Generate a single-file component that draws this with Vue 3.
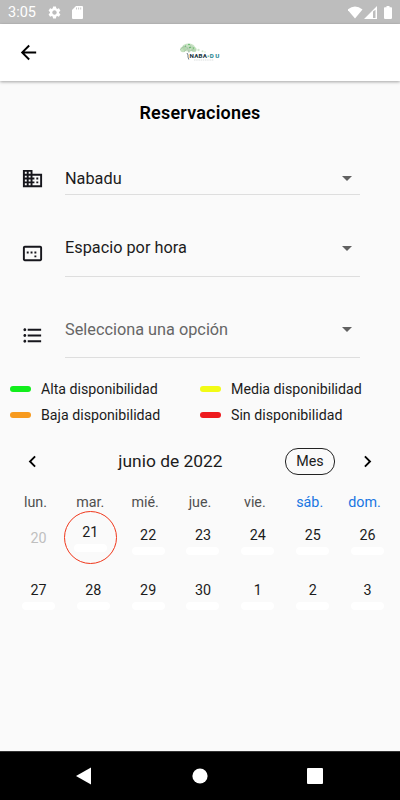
<template>
  <div class="screen">
    <div class="status-bar">
      <span class="clock">3:05</span>
      <svg class="gear" viewBox="0 0 24 24">
        <path fill="#fff" d="M19.14 12.94c.04-.3.06-.61.06-.94 0-.32-.02-.64-.07-.94l2.03-1.58c.18-.14.23-.41.12-.61l-1.92-3.32c-.12-.22-.37-.29-.59-.22l-2.39.96c-.5-.38-1.03-.7-1.62-.94l-.36-2.54c-.04-.24-.24-.41-.48-.41h-3.84c-.24 0-.43.17-.47.41l-.36 2.54c-.59.24-1.13.57-1.62.94l-2.39-.96c-.22-.08-.47 0-.59.22L2.74 8.87c-.12.21-.08.47.12.61l2.03 1.58c-.05.3-.09.63-.09.94s.02.64.07.94l-2.03 1.58c-.18.14-.23.41-.12.61l1.92 3.32c.12.22.37.29.59.22l2.39-.96c.5.38 1.03.7 1.62.94l.36 2.54c.05.24.24.41.48.41h3.84c.24 0 .44-.17.47-.41l.36-2.54c.59-.24 1.13-.56 1.62-.94l2.39.96c.22.08.47 0 .59-.22l1.92-3.32c.12-.22.07-.47-.12-.61l-2.01-1.58zM12 15.6c-1.98 0-3.6-1.62-3.6-3.6s1.62-3.6 3.6-3.6 3.6 1.62 3.6 3.6-1.62 3.6-3.6 3.6z" />
      </svg>
      <svg class="sd" viewBox="0 0 11 13">
        <path fill="#fff" d="M4 0h6q1 0 1 1v11q0 1-1 1H1q-1 0-1-1V4z" />
        <path stroke="#bdbdbd" stroke-width="0.8" d="M4.5 1.5v2M6.6 1.5v2M8.7 1.5v2" />
      </svg>
      <svg class="signals" viewBox="0 0 46 14">
        <path fill="#fff" d="M-0.500 3.600Q7-2.600 14.500 3.600L7 12.500z" />
        <path fill="#fff" fill-rule="evenodd" d="M29 0v13H16zM25 5.500V12h2.500V3.800z" />
        <path fill="#fff" d="M38.500 0h3v1.300h1.700q.8 0 .8.800v10q0 .8-.8.800h-6.400q-.8 0-.8-.8v-10q0-.8.8-.8h1.700z" />
      </svg>
    </div>

    <header class="app-bar">
      <svg class="back" viewBox="0 0 24 24">
        <path d="M20 11H7.830l5.590-5.590L12 4l-8 8 8 8 1.410-1.410L7.830 13H20v-2z" />
      </svg>
      <svg class="logo" viewBox="0 0 42 20">
        <g fill="#a9d3a3">
          <ellipse cx="9.500" cy="5.500" rx="6.500" ry="4" opacity="0.65" />
          <circle cx="4" cy="7.500" r="2.800" opacity="0.7" />
          <circle cx="15" cy="7.500" r="2.600" opacity="0.7" />
          <circle cx="19.500" cy="8" r="1.200" opacity="0.55" />
          <circle cx="23.500" cy="9.300" r="1" opacity="0.55" />
          <circle cx="26" cy="10" r="0.700" opacity="0.55" />
        </g>
        <g fill="none" stroke="#8fae93" stroke-width="0.4">
          <path d="M1 8q5-6 8-2M5 10q3-5 9-5M4 4q5 1 6 6M12 3q-3 4-2 8M9 10q4-3 8-2" />
        </g>
        <g fill="#3fae49">
          <circle cx="10" cy="2.500" r="0.700" />
          <circle cx="11" cy="5.500" r="0.700" />
          <circle cx="6.500" cy="4" r="0.500" />
          <circle cx="14.500" cy="6" r="0.500" />
        </g>
        <path d="M8 11q1.500 2 1 4l.8 2.500" fill="none" stroke="#31444c" stroke-width="0.7" />
        <text x="10.500" y="16.200" textLength="17.500" class="logo-name">NABA</text>
        <text x="28" y="16.500" class="logo-star">*</text>
        <text x="30.800" y="16.200" textLength="9.500" class="logo-name logo-end">DU</text>
        <path d="M15 18h20" stroke="#c4caca" stroke-width="0.6" stroke-dasharray="1.500 0.700" />
      </svg>
    </header>

    <main class="content">
      <h1>Reservaciones</h1>

      <div v-for="field in fields" :key="field.icon" class="field" :class="field.icon">
        <svg class="field-icon" viewBox="0 0 24 24">
          <path :d="icons[field.icon]" />
        </svg>
        <div class="select" :class="{ placeholder: field.empty }">
          <span>{{ field.label }}</span>
          <svg class="caret" viewBox="0 0 10 5"><path d="M0 0h10L5 5z" /></svg>
        </div>
      </div>

      <div class="legend">
        <div v-for="item in legend" :key="item.name" class="legend-item">
          <span class="swatch" :class="item.name"></span>
          <span>{{ item.label }}</span>
        </div>
      </div>

      <div class="calendar-header">
        <svg class="chevron" viewBox="0 0 24 24">
          <path d="M15.410 7.410L14 6l-6 6 6 6 1.410-1.410L10.830 12z" />
        </svg>
        <span class="month">junio de 2022</span>
        <button class="format">Mes</button>
        <svg class="chevron" viewBox="0 0 24 24">
          <path d="M10 6L8.590 7.410 13.170 12l-4.580 4.590L10 18l6-6z" />
        </svg>
      </div>

      <div class="weekdays">
        <span v-for="(name, i) in weekdays" :key="name" :class="{ weekend: i > 4 }">{{ name }}</span>
      </div>
      <div class="days">
        <div v-for="day in days" :key="day" class="day" :class="{ past: day === 20, today: day === 21 }">
          <span class="number">{{ day }}</span>
          <span v-if="day !== 20" class="marker"></span>
        </div>
      </div>
    </main>

    <nav class="nav-bar">
      <svg viewBox="0 0 18 18"><path d="M1 9L16 .5v17z" /></svg>
      <svg viewBox="0 0 18 18"><circle cx="9" cy="9" r="7.600" /></svg>
      <svg viewBox="0 0 18 18"><rect x="1" y="1" width="16" height="16" rx="1" /></svg>
    </nav>
  </div>
</template>

<script setup>
const icons = {
  building: 'M12 7V3H2v18h20V7H12zM6 19H4v-2h2v2zm0-4H4v-2h2v2zm0-4H4V9h2v2zm0-4H4V5h2v2zm4 12H8v-2h2v2zm0-4H8v-2h2v2zm0-4H8V9h2v2zm0-4H8V5h2v2zm10 12h-8v-2h2v-2h-2v-2h2v-2h-2V9h8v10zm-2-8h-2v2h2v-2zm0 4h-2v2h2v-2z',
  space: 'M20 4H4c-1.110 0-2 .9-2 2v12c0 1.100.89 2 2 2h16c1.100 0 2-.9 2-2V6c0-1.100-.9-2-2-2zm0 14H4V6h16v12zM6 10h2v2H6zm4 0h2v2h-2zm4 0h2v2h-2zm0 4h2v2h-2z',
  list: 'M4 10.500c-.83 0-1.500.67-1.500 1.500s.67 1.500 1.500 1.500 1.500-.67 1.500-1.500-.67-1.500-1.500-1.500zm0-6c-.83 0-1.500.67-1.500 1.500S3.170 7.500 4 7.500 5.500 6.830 5.500 6 4.830 4.500 4 4.500zm0 12c-.83 0-1.500.68-1.500 1.500s.68 1.500 1.500 1.500 1.500-.68 1.500-1.500-.67-1.500-1.500-1.500zM7 19h14v-2H7v2zm0-6h14v-2H7v2zm0-8v2h14V5H7z',
};

const fields = [
  { icon: 'building', label: 'Nabadu' },
  { icon: 'space', label: 'Espacio por hora' },
  { icon: 'list', label: 'Selecciona una opción', empty: true },
];

const legend = [
  { name: 'high', label: 'Alta disponibilidad' },
  { name: 'medium', label: 'Media disponibilidad' },
  { name: 'low', label: 'Baja disponibilidad' },
  { name: 'none', label: 'Sin disponibilidad' },
];

const weekdays = ['lun.', 'mar.', 'mié.', 'jue.', 'vie.', 'sáb.', 'dom.'];
const days = [20, 21, 22, 23, 24, 25, 26, 27, 28, 29, 30, 1, 2, 3];
</script>

<style>
body {
  margin: 0;
}
</style>

<style scoped>
.screen {
  width: 400px;
  height: 800px;
  display: flex;
  flex-direction: column;
  overflow: hidden;
  background: #fafafa;
  color: #1c1c1c;
  font-family: Roboto, sans-serif;
}

svg {
  display: block;
  flex: none;
}

.status-bar {
  height: 24px;
  flex: none;
  display: flex;
  align-items: center;
  box-sizing: border-box;
  padding: 1px 8px 0;
  background: #bdbdbd;
  color: #fff;
}

.clock {
  width: 39px;
  font-size: 14.500px;
  line-height: 24px;
}

.gear {
  width: 15px;
  height: 15px;
}

.sd {
  width: 11px;
  height: 13px;
  margin-left: 10px;
}

.signals {
  width: 46px;
  height: 14px;
  margin-left: auto;
  margin-right: -2px;
}

.app-bar {
  height: 57px;
  flex: none;
  display: flex;
  align-items: center;
  box-sizing: border-box;
  padding-left: 17px;
  background: #fff;
  box-shadow: 0 1px 3px rgba(0, 0, 0, 0.35);
  z-index: 1;
}

.back {
  width: 23px;
  height: 23px;
}

.logo {
  width: 42px;
  height: 20px;
  margin-left: 139px;
  margin-top: -2px;
}

.logo-name {
  font-size: 6.200px;
  font-weight: 800;
  fill: #243a46;
}

.logo-star {
  font-size: 6px;
  fill: #4caf9a;
}

.logo-end {
  fill: #2b8a94;
}

.content {
  flex: 1;
}

h1 {
  margin: 20px 0 0;
  font-size: 18px;
  font-weight: 600;
  line-height: 24px;
  letter-spacing: 0.2px;
  text-align: center;
  color: #000;
}

.field {
  display: flex;
  padding-left: 21px;
}

.field-icon {
  width: 23px;
  height: 23px;
  fill: #16161c;
}

.select {
  width: 295px;
  margin-left: 21px;
  display: flex;
  align-items: flex-start;
  justify-content: space-between;
  box-sizing: border-box;
  border-bottom: 1px solid #dedede;
  font-size: 16.300px;
  line-height: 25px;
}

.select.placeholder {
  color: #666;
}

.caret {
  width: 10px;
  height: 5px;
  margin: 10px 8px 0 0;
  fill: #616161;
}

.building {
  margin-top: 41px;
}

.building .select {
  height: 29px;
}

.building .field-icon {
  margin-top: 1px;
}

.space {
  margin-top: 41px;
}

.space .select,
.list .select {
  height: 41px;
}

.space .select {
  line-height: 23px;
}

.space .field-icon {
  margin-top: 6px;
}

.list .field-icon {
  margin-top: 7px;
}

.list {
  margin-top: 40px;
}

.legend {
  display: grid;
  grid-template-columns: 190px 190px;
  padding: 18px 0 1px 10px;
}

.legend-item {
  display: flex;
  align-items: center;
  height: 26px;
  font-size: 14.200px;
}

.swatch {
  width: 21px;
  height: 6px;
  margin-right: 10px;
  border-radius: 3px;
}

.high {
  background: #12ee1c;
}

.medium {
  background: #f2fb16;
}

.low {
  background: #f79a1e;
}

.none {
  background: #ee1a1e;
}

.calendar-header {
  display: flex;
  align-items: center;
  height: 28px;
  margin-top: 18px;
  padding: 0 21px;
}

.chevron {
  width: 23px;
  height: 23px;
}

.month {
  flex: 1;
  padding-left: 12px;
  font-size: 17.400px;
  text-align: center;
}

.format {
  width: 50px;
  height: 27px;
  margin-right: 21px;
  padding: 0;
  border: 1px solid #222;
  border-radius: 13px;
  background: none;
  color: inherit;
  font: inherit;
  font-size: 14.300px;
}

.weekdays,
.days {
  display: grid;
  grid-template-columns: repeat(7, 1fr);
  margin: 0 8px;
}

.weekdays {
  margin-top: 19px;
  font-size: 14.300px;
  line-height: 16px;
  text-align: center;
  color: #4f4f4f;
}

.weekend {
  color: #1976e2;
}

.days {
  grid-auto-rows: 55px;
  font-size: 14.300px;
}

.day {
  display: flex;
  flex-direction: column;
  align-items: center;
  box-sizing: border-box;
  padding: 16px 0 0 6px;
}

.number {
  line-height: 18px;
}

.marker {
  width: 33px;
  height: 8px;
  margin-top: 3px;
  border-radius: 4px;
  background: #fff;
}

.past {
  padding-top: 19px;
  color: #bfbfbf;
}

.today {
  width: 53px;
  height: 53px;
  justify-self: center;
  margin-top: 1px;
  padding: 11px 0 0;
  border: 1px solid #f0371b;
  border-radius: 50%;
}

.nav-bar {
  height: 49px;
  flex: none;
  display: flex;
  align-items: center;
  justify-content: space-between;
  box-sizing: border-box;
  padding: 0 76px 0 75px;
  background: #000;
  border-top: 1px solid #333;
  fill: #fff;
}

.nav-bar svg {
  width: 18px;
  height: 18px;
}
</style>
